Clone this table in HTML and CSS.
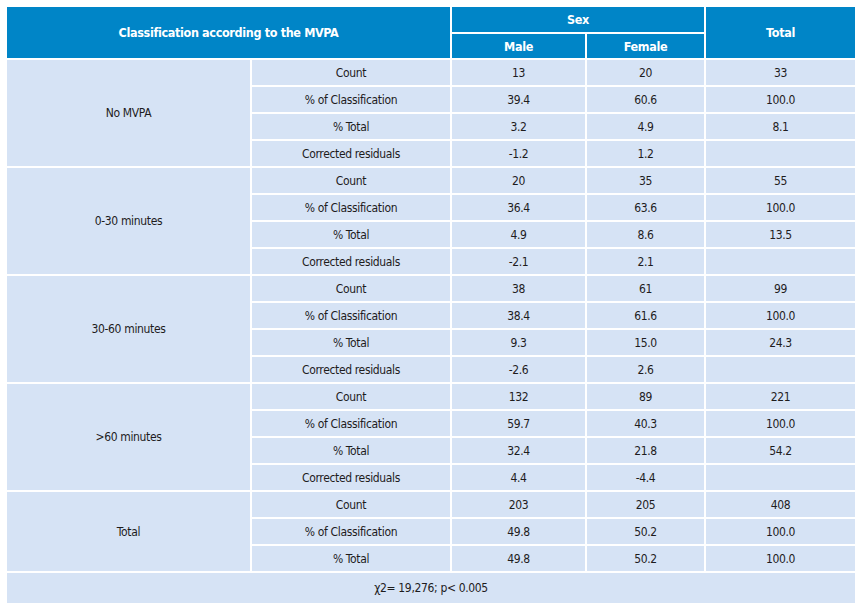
FILE: index.html
```html
<!DOCTYPE html>
<html>
<head>
<meta charset="utf-8">
<link rel="stylesheet" href="styles.css">
</head>
<body>
<table class="tbl">
  <colgroup>
    <col class="c1"><col class="c2"><col class="c3"><col class="c4"><col class="c5">
  </colgroup>
  <thead>
    <tr class="h1">
      <th colspan="2" rowspan="2">Classification according to the MVPA</th>
      <th colspan="2">Sex</th>
      <th rowspan="2">Total</th>
    </tr>
    <tr class="h2">
      <th>Male</th>
      <th>Female</th>
    </tr>
  </thead>
  <tbody>
    <tr><td rowspan="4">No MVPA</td><td>Count</td><td>13</td><td>20</td><td>33</td></tr>
    <tr><td>% of Classification</td><td>39.4</td><td>60.6</td><td>100.0</td></tr>
    <tr><td>% Total</td><td>3.2</td><td>4.9</td><td>8.1</td></tr>
    <tr><td>Corrected residuals</td><td>-1.2</td><td>1.2</td><td></td></tr>

    <tr><td rowspan="4">0-30 minutes</td><td>Count</td><td>20</td><td>35</td><td>55</td></tr>
    <tr><td>% of Classification</td><td>36.4</td><td>63.6</td><td>100.0</td></tr>
    <tr><td>% Total</td><td>4.9</td><td>8.6</td><td>13.5</td></tr>
    <tr><td>Corrected residuals</td><td>-2.1</td><td>2.1</td><td></td></tr>

    <tr><td rowspan="4">30-60 minutes</td><td>Count</td><td>38</td><td>61</td><td>99</td></tr>
    <tr><td>% of Classification</td><td>38.4</td><td>61.6</td><td>100.0</td></tr>
    <tr><td>% Total</td><td>9.3</td><td>15.0</td><td>24.3</td></tr>
    <tr><td>Corrected residuals</td><td>-2.6</td><td>2.6</td><td></td></tr>

    <tr><td rowspan="4">&gt;60 minutes</td><td>Count</td><td>132</td><td>89</td><td>221</td></tr>
    <tr><td>% of Classification</td><td>59.7</td><td>40.3</td><td>100.0</td></tr>
    <tr><td>% Total</td><td>32.4</td><td>21.8</td><td>54.2</td></tr>
    <tr><td>Corrected residuals</td><td>4.4</td><td>-4.4</td><td></td></tr>

    <tr><td rowspan="3">Total</td><td>Count</td><td>203</td><td>205</td><td>408</td></tr>
    <tr><td>% of Classification</td><td>49.8</td><td>50.2</td><td>100.0</td></tr>
    <tr><td>% Total</td><td>49.8</td><td>50.2</td><td>100.0</td></tr>
  </tbody>
  <tfoot>
    <tr><td colspan="5" class="foot">χ2= 19,276; p&lt; 0.005</td></tr>
  </tfoot>
</table>
</body>
</html>
```

FILE: styles.css
```css
html, body {
  margin: 0;
  padding: 0;
  background: #ffffff;
}
body {
  padding: 5px;
  font-family: "DejaVu Sans Condensed", "DejaVu Sans", sans-serif;
  font-stretch: condensed;
  color: #1e1c1d;
}
.tbl {
  border-collapse: separate;
  border-spacing: 2px;
  table-layout: fixed;
  width: 852px;
  font-size: 12px;
  letter-spacing: -0.35px;
}
.c1 { width: 243px; }
.c2 { width: 198px; }
.c3 { width: 133px; }
.c4 { width: 117px; }
.c5 { width: 149px; }
.tbl th {
  background: #0085c7;
  color: #ffffff;
  font-weight: bold;
  font-size: 12.5px;
  letter-spacing: -0.35px;
  padding: 0;
  text-align: center;
  vertical-align: middle;
}
.h1 th { height: 25px; }
.h2 th { height: 24px; }
.tbl td {
  background: #d6e3f5;
  height: 25px;
  padding: 0;
  text-align: center;
  vertical-align: middle;
}
.tbl td.foot {
  height: 30px;
}
```
